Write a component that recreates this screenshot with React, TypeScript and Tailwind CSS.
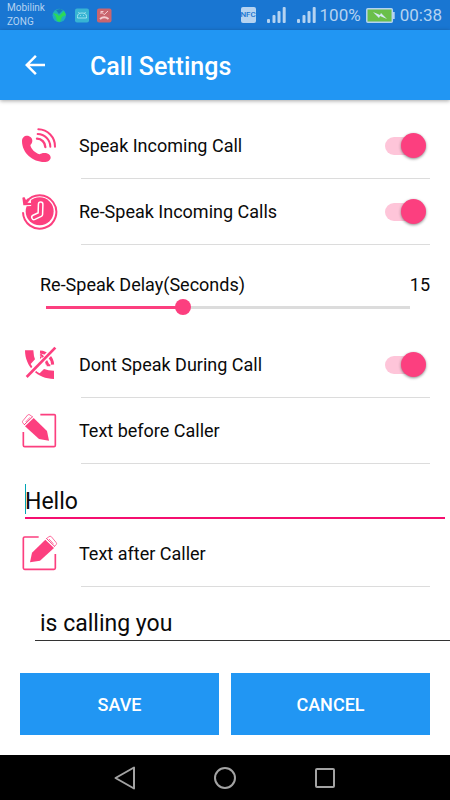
import { useState } from "react";
import type { ReactNode } from "react";

const PINK = "#fc3f7f";

const CallIcon = () => (
  <svg viewBox="0 0 111 111" className="size-[37px] shrink-0" fill="none">
    <path
      fill={PINK}
      d="M3 42C3 32 10 26 18 26c9 0 16 7 16 15 0 6-3 9-6 13 2 12 14 24 28 28 4-2 7-4 14-4 11 0 19 6 19 14-1 8-9 13-19 13C35 105 3 78 3 42Z"
    />
    <g stroke={PINK} strokeLinecap="round">
      <path strokeWidth="6" d="M52 7a51 51 0 0 1 50 52" />
      <path strokeWidth="6" d="M50 21a39 39 0 0 1 38 38" />
      <path strokeWidth="7" d="M48 35a26 26 0 0 1 25 25" />
    </g>
  </svg>
);

const RepeatIcon = () => (
  <svg viewBox="0 0 111 111" className="size-[37px] shrink-0" fill="none">
    <circle cx="56" cy="55" r="42" fill={PINK} />
    <path stroke="#fff" strokeWidth="18" d="M14 31l16-1" />
    <path stroke={PINK} strokeWidth="6" d="M16 27A50 50 0 1 1 6 58" />
    <path fill="#fff" d="M0 37h11v17H0Z" />
    <path fill={PINK} d="M10 12l5 9 6-5 5 6-7 7 14 1-2 6-24 1-3-23Z" />
    <g strokeLinejoin="round" strokeLinecap="round">
      <path stroke="#fff" strokeWidth="18" d="M59 34l-1 30-19 9" />
      <path stroke={PINK} strokeWidth="9" d="M59 34l-1 30-19 9" />
    </g>
  </svg>
);

const CallOffIcon = () => (
  <svg viewBox="0 0 111 111" className="size-[37px] shrink-0" fill="none">
    <path
      fill={PINK}
      d="M12 13h25q1 18 5 27L29 54q10 19 27 28l13-13q12 5 30 5v25C50 99 12 62 12 13Z"
    />
    <g stroke={PINK} strokeWidth="9">
      <path d="M57 18a40 40 0 0 1 38 38" />
      <path d="M57 35a23 23 0 0 1 22 21" />
    </g>
    <path stroke="#fff" strokeWidth="17" d="M12 97L106 2" />
    <path stroke={PINK} strokeWidth="8" d="M17 93L103 5" />
    <path stroke={PINK} strokeWidth="6" d="M58 25l9 8M80 50v8h8" />
  </svg>
);

const Pencil = () => (
  <>
    <path fill={PINK} d="M38 18l40 39 6 29-30-5L12 43Z" />
    <path stroke={PINK} strokeWidth="3" d="M35 14L9 39" />
    <path
      stroke={PINK}
      strokeOpacity=".75"
      strokeWidth="3"
      strokeLinejoin="round"
      d="M10 38l-5-6q-2-3 1-6L20 9q4-3 7 0l8 6M14 30l13-14"
    />
  </>
);

const EditBeforeIcon = () => (
  <svg viewBox="0 0 111 111" className="size-[37px] shrink-0" fill="none">
    <path stroke={PINK} strokeWidth="5" d="M58 8h42q3 0 3 3v89q0 4-4 4H11q-4 0-4-4V60" />
    <Pencil />
  </svg>
);

const EditAfterIcon = () => (
  <svg viewBox="0 0 111 111" className="size-[37px] shrink-0" fill="none">
    <path stroke={PINK} strokeWidth="5" d="M53 6H11q-4 0-4 4v89q0 4 4 4h88q4 0 4-4V57" />
    <g transform="translate(111 -4) scale(-1 1)">
      <Pencil />
    </g>
  </svg>
);

const Signal = () => (
  <svg viewBox="0 0 19 16" className="h-4 w-[19px]" fill="#b5d3f1">
    <rect x="0" y="12" width="3" height="4" rx="1" />
    <rect x="5.5" y="8" width="3" height="8" rx="1" />
    <rect x="10.5" y="4" width="3" height="12" rx="1" />
    <rect x="15.7" y="0" width="3" height="16" rx="1" />
  </svg>
);

const StatusBar = () => (
  <div className="flex h-[30px] items-center bg-[#1976d2] pr-2 pl-[7px] text-[#b5d3f1]">
    <div className="w-[45px] text-[10px] leading-[14px]">
      Mobilink
      <br />
      ZONG
    </div>
    <svg viewBox="0 0 60 15" className="h-[15px] w-[60px]" fill="none">
      <circle cx="7.2" cy="7.5" r="6.7" fill="#20aebb" />
      <path fill="#2bd957" d="M1 5l4 1 2 2 5-5 2 4-4 2-2 5-3-1-1-4Z" />
      <path fill="#1779c0" d="M4 2l3 4 4-4-3-1Z" />
      <rect x="23" y=".5" width="14" height="14" rx="2" fill="#37b4d3" />
      <path stroke="#9ee2ee" d="M25.5 10V8.5q0-3.5 4.5-3.5t4.5 3.5V10Z" />
      <path stroke="#9ee2ee" d="M26.5 4l1 1.5M33.5 4l-1 1.5M28 7.5h.8M31.2 7.5h.8" />
      <rect x="45" y=".5" width="14.5" height="14" rx="2" fill="#c9656e" />
      <path stroke="#f5cdd0" strokeWidth="2" d="M48 11q4.2-3.500 8.500 0" />
      <path stroke="#f5cdd0" d="M49 6V3.500h2.500M49 3.500l3.200 3.200L56 3" />
    </svg>
    <div className="ml-auto flex items-center">
      <span className="flex h-4 w-[15px] items-center justify-center rounded-xs bg-[#b5d3f1] text-[8px] font-medium text-[#1976d2]">
        NFC
      </span>
      <span className="ml-[11px] flex gap-[11px]">
        <Signal />
        <Signal />
      </span>
      <span className="ml-1 text-[17px] leading-5">100%</span>
      <svg viewBox="0 0 29 15" className="ml-[5px] h-[15px] w-[29px]">
        <rect x=".8" y=".8" width="25.5" height="13.4" rx="1" fill="#6abf4b" stroke="#b5d3f1" strokeWidth="1.5" />
        <rect x="27" y="4" width="1.7" height="7" fill="#b5d3f1" />
        <path fill="#d5e9f5" d="M7 4l7 3 1-2 6 6-7-3-1 2Z" />
      </svg>
      <span className="ml-[5px] text-[17px] leading-5">00:38</span>
    </div>
  </div>
);

type RowProps = {
  id: string;
  label: string;
  icon: ReactNode;
  toggle?: boolean;
};

const Row = ({ id, label, icon, toggle }: RowProps) => (
  <div>
    <div className="flex h-[65px] items-center pr-6 pl-[21px]">
      {icon}
      <label htmlFor={id} className="ml-[21px] flex-1 text-[18px] leading-6">
        {label}
      </label>
      {toggle && (
        <input
          id={id}
          type="checkbox"
          role="switch"
          defaultChecked
          className="relative h-[25px] w-[41px] appearance-none before:absolute before:top-1 before:left-0 before:h-[18px] before:w-9 before:rounded-full before:bg-gray-300 after:absolute after:left-0 after:size-[25px] after:rounded-full after:bg-gray-50 after:shadow-[0_1px_3px_rgba(0,0,0,0.45)] checked:before:bg-[#fec5d9] checked:after:left-4 checked:after:bg-[#fc3f7f]"
        />
      )}
    </div>
    <div className="mr-5 ml-[81px] h-px bg-[#dcdcdc]" />
  </div>
);

const MAX_DELAY = 40;

const DelaySlider = () => {
  const [delay, setDelay] = useState(15);
  return (
    <div className="h-[87px] pt-7">
      <div className="flex justify-between pr-5 pl-10 text-[18px] leading-6">
        <label htmlFor="delay">Re-Speak Delay(Seconds)</label>
        <output htmlFor="delay">{delay}</output>
      </div>
      <div className="mr-8 ml-[38px] grid items-center">
        <div className="col-start-1 row-start-1 mx-2 h-[3px] bg-[#dcdcdc]">
          <div className="h-full bg-[#fc3f7f]" style={{ width: `${(delay / MAX_DELAY) * 100}%` }} />
        </div>
        <input
          id="delay"
          type="range"
          min={0}
          max={MAX_DELAY}
          value={delay}
          onChange={(e) => setDelay(Number(e.target.value))}
          className="col-start-1 row-start-1 h-5 w-full appearance-none bg-transparent [&::-webkit-slider-thumb]:size-4 [&::-webkit-slider-thumb]:appearance-none [&::-webkit-slider-thumb]:rounded-full [&::-webkit-slider-thumb]:bg-[#fc3f7f]"
        />
      </div>
    </div>
  );
};

const NavBar = () => (
  <nav className="flex h-[45px] items-center justify-center gap-[76px] bg-black">
    <button aria-label="Back">
      <svg viewBox="0 0 24 24" className="size-6" fill="none" stroke="#a3a3a3" strokeWidth="2" strokeLinejoin="round">
        <path d="M21 1.500v21L2.500 12Z" />
      </svg>
    </button>
    <button aria-label="Home">
      <svg viewBox="0 0 24 24" className="size-6" fill="none" stroke="#a3a3a3" strokeWidth="2">
        <circle cx="12" cy="12" r="10" />
      </svg>
    </button>
    <button aria-label="Recent apps">
      <svg viewBox="0 0 24 24" className="size-6" fill="none" stroke="#a3a3a3" strokeWidth="2">
        <rect x="3" y="3" width="18" height="18" rx="1" />
      </svg>
    </button>
  </nav>
);

const App = () => {
  return (
    <div className="flex min-h-screen flex-col bg-white font-['Roboto',sans-serif] text-[#0a0a0a]">
      <StatusBar />
      <header className="flex h-[70px] items-center bg-[#2196f3] pl-5 text-white shadow-[0_1px_4px_rgba(0,0,0,0.35)]">
        <button aria-label="Go back">
          <svg viewBox="0 0 24 24" className="size-[30px]" fill="currentColor">
            <path d="M20 11H7.830l5.590-5.590L12 4l-8 8 8 8 1.410-1.410L7.830 13H20v-2z" />
          </svg>
        </button>
        <h1 className="ml-10 pt-1 text-[25px] leading-8 font-medium">Call Settings</h1>
      </header>
      <main className="flex-1 pt-[13px]">
        <Row id="speak" label="Speak Incoming Call" icon={<CallIcon />} toggle />
        <Row id="respeak" label="Re-Speak Incoming Calls" icon={<RepeatIcon />} toggle />
        <DelaySlider />
        <Row id="dont-speak" label="Dont Speak During Call" icon={<CallOffIcon />} toggle />
        <Row id="before" label="Text before Caller" icon={<EditBeforeIcon />} />
        <div className="relative mr-[5px] mb-0.5 ml-[25px] pt-5">
          <input
            id="before"
            defaultValue="Hello"
            className="block h-[35px] w-full border-b-2 border-[#f50f70] pt-0.5 text-[23px] outline-none"
          />
          <span className="absolute top-5 left-0 h-[30px] w-px bg-[#00a5b5]" />
        </div>
        <Row id="after" label="Text after Caller" icon={<EditAfterIcon />} />
        <div className="ml-[35px] pt-5">
          <input
            id="after"
            defaultValue="is calling you"
            className="block h-[34px] w-full border-b border-[#333] pt-0.5 pl-[5px] text-[23px] outline-none"
          />
        </div>
        <div className="grid grid-cols-2 gap-3 px-5 pt-8 pb-5 text-[18px] font-medium text-white">
          <button className="h-[62px] bg-[#2196f3]">SAVE</button>
          <button className="h-[62px] bg-[#2196f3]">CANCEL</button>
        </div>
      </main>
      <NavBar />
    </div>
  );
};

export default App;
